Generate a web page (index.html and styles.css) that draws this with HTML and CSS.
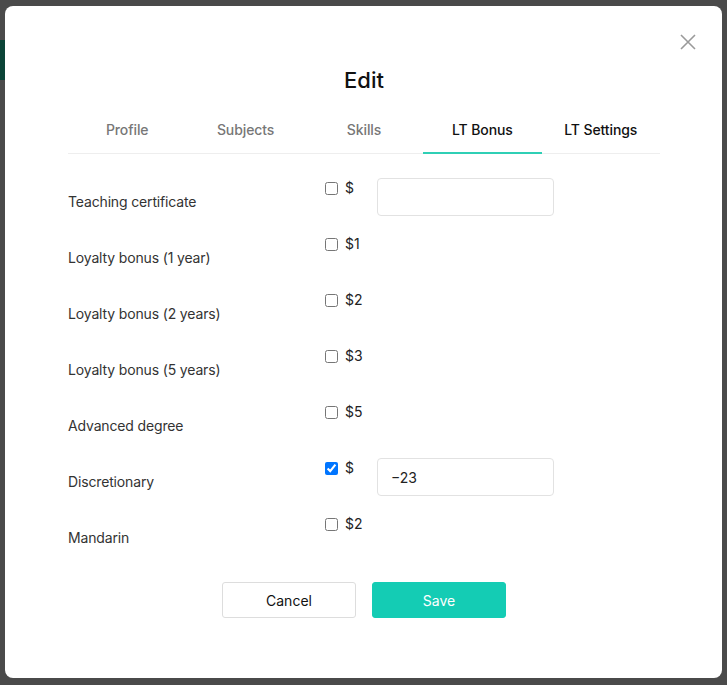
FILE: index.html
```html
<!DOCTYPE html>
<html lang="en">
<head>
<meta charset="utf-8">
<title>Edit</title>
<link rel="stylesheet" href="styles.css">
</head>
<body>
<div class="backdrop">
  <div class="bg-strip"></div>
</div>
<div class="modal">
  <button class="close" aria-label="Close">
    <svg width="16" height="16" viewBox="0 0 16 16"><path d="M1 1L15 15M15 1L1 15" stroke="#9a9a9a" stroke-width="1.6" fill="none"/></svg>
  </button>
  <h1 class="title">Edit</h1>
  <nav class="tabs">
    <div class="tab">Profile</div>
    <div class="tab">Subjects</div>
    <div class="tab">Skills</div>
    <div class="tab active">LT Bonus</div>
    <div class="tab active-text">LT Settings</div>
  </nav>
  <div class="rows">
    <div class="row">
      <div class="label">Teaching certificate</div>
      <label class="check"><input type="checkbox"><span>$</span></label>
      <input class="amount" type="text" value="">
    </div>
    <div class="row">
      <div class="label">Loyalty bonus (1 year)</div>
      <label class="check"><input type="checkbox"><span>$1</span></label>
    </div>
    <div class="row">
      <div class="label">Loyalty bonus (2 years)</div>
      <label class="check"><input type="checkbox"><span>$2</span></label>
    </div>
    <div class="row">
      <div class="label">Loyalty bonus (5 years)</div>
      <label class="check"><input type="checkbox"><span>$3</span></label>
    </div>
    <div class="row">
      <div class="label">Advanced degree</div>
      <label class="check"><input type="checkbox"><span>$5</span></label>
    </div>
    <div class="row">
      <div class="label">Discretionary</div>
      <label class="check"><input type="checkbox" checked><span>$</span></label>
      <input class="amount" type="text" value="−23">
    </div>
    <div class="row">
      <div class="label">Mandarin</div>
      <label class="check"><input type="checkbox"><span>$2</span></label>
    </div>
  </div>
  <div class="actions">
    <button class="btn cancel">Cancel</button>
    <button class="btn save">Save</button>
  </div>
</div>
</body>
</html>
```

FILE: styles.css
```css
html, body {
  margin: 0;
  padding: 0;
}
body {
  width: 727px;
  height: 685px;
  background: #4a4a4a;
  font-family: Inter, "Noto Sans", "Liberation Sans", sans-serif;
  color: #222;
  overflow: hidden;
}
.backdrop {
  height: 685px;
  padding-top: 40px;
  box-sizing: border-box;
}
.bg-strip {
  width: 5px;
  height: 40px;
  background: #0b4437;
}
.modal {
  position: absolute;
  left: 5px;
  top: 6px;
  width: 717px;
  height: 672px;
  box-sizing: border-box;
  background: #fff;
  border-radius: 8px;
  padding: 59px 62px 0 63px;
}
.close {
  position: absolute;
  right: 26px;
  top: 28px;
  width: 16px;
  height: 16px;
  padding: 0;
  border: 0;
  background: none;
  display: flex;
}
.title {
  margin: 0;
  text-align: center;
  font-size: 22px;
  line-height: 30px;
  font-weight: 500;
  color: #111;
}
.tabs {
  margin-top: 15px;
  display: grid;
  grid-template-columns: repeat(5, 1fr);
  border-bottom: 1px solid #eeeeee;
}
.tab {
  position: relative;
  text-align: center;
  font-size: 14px;
  line-height: 20px;
  padding: 10px 0 13px;
  color: #777;
  font-weight: 500;
  letter-spacing: -0.1px;
}
.tab.active, .tab.active-text {
  color: #111;
}
.tab.active::after {
  content: "";
  position: absolute;
  left: 0;
  right: 0;
  bottom: -1px;
  height: 2px;
  background: #2fcfb5;
}
.rows {
  margin-top: 19px;
}
.row {
  display: grid;
  grid-template-columns: 257px 52px 177px;
  height: 56px;
  align-items: start;
}
.label {
  padding-top: 19px;
  font-size: 14px;
  line-height: 20px;
  color: #333;
  letter-spacing: -0.15px;
}
.check {
  display: flex;
  align-items: center;
  gap: 7px;
  padding-top: 5px;
  font-size: 14px;
  line-height: 20px;
  color: #222;
}
.check input {
  margin: 0;
  width: 13px;
  height: 13px;
}
.amount {
  margin-top: 5px;
  height: 38px;
  width: 177px;
  box-sizing: border-box;
  border: 1px solid #e2e2e2;
  border-radius: 4px;
  padding: 0 13px;
  font: inherit;
  font-size: 14px;
  color: #222;
  outline: none;
}
.actions {
  margin-top: 17px;
  display: flex;
  justify-content: center;
  gap: 16px;
}
.btn {
  width: 134px;
  height: 36px;
  border-radius: 3px;
  font-family: inherit;
  font-size: 14px;
  font-weight: 400;
}
.cancel {
  background: #fff;
  border: 1px solid #dddddd;
  color: #111;
}
.save {
  background: #14ccb4;
  border: 1px solid #14ccb4;
  color: #fff;
}
```
